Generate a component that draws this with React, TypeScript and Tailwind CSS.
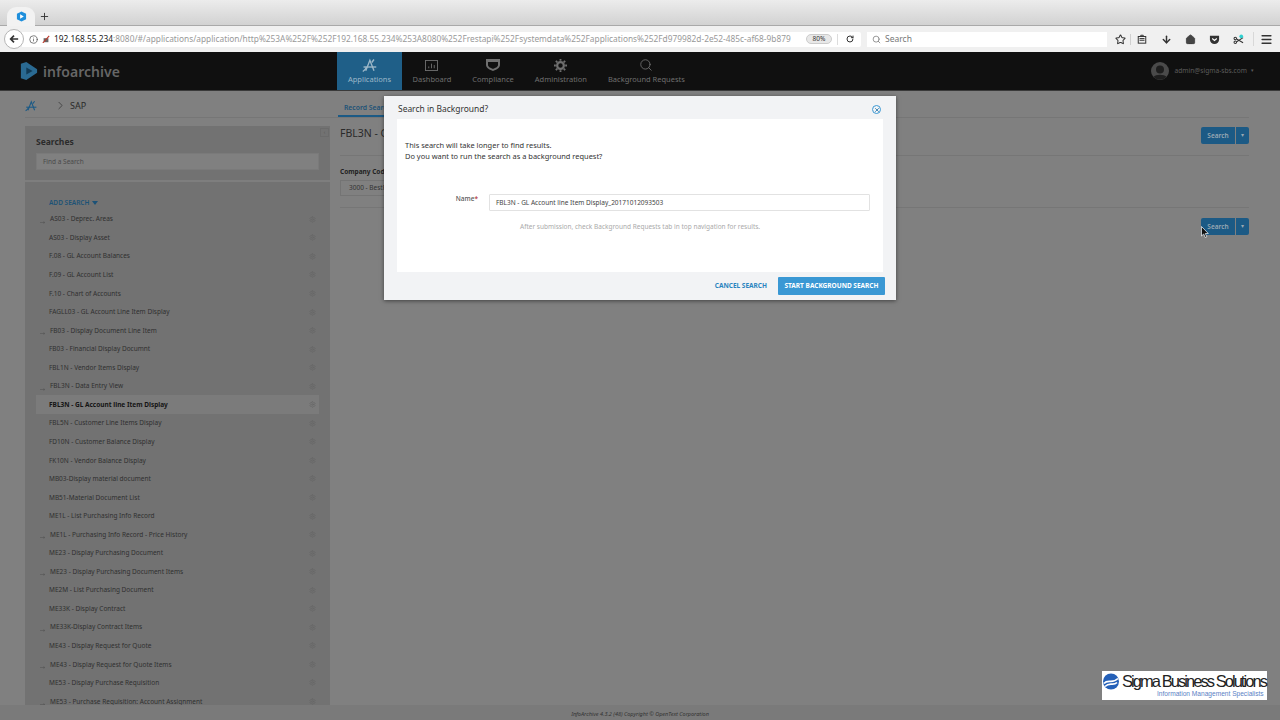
import {ArrowDown, ChevronRight, Home, Info, Menu, Plus, RotateCw, Search, Settings, Star, X} from "lucide-react";

const SEARCHES = [
    {name: "AS03 - Deprec. Areas", sub: true},
    {name: "AS03 - Display Asset"},
    {name: "F.08 - GL Account Balances"},
    {name: "F.09 - GL Account List"},
    {name: "F.10 - Chart of Accounts"},
    {name: "FAGLL03 - GL Account Line Item Display"},
    {name: "FB03 - Display Document Line Item", sub: true},
    {name: "FB03 - Financial Display Documnt"},
    {name: "FBL1N - Vendor Items Display"},
    {name: "FBL3N - Data Entry View", sub: true},
    {name: "FBL3N - GL Account line Item Display", active: true},
    {name: "FBL5N - Customer Line Items Display"},
    {name: "FD10N - Customer Balance Display"},
    {name: "FK10N - Vendor Balance Display"},
    {name: "MB03-Display material document"},
    {name: "MB51-Material Document List"},
    {name: "ME1L - List Purchasing Info Record"},
    {name: "ME1L - Purchasing Info Record - Price History", sub: true},
    {name: "ME23 - Display Purchasing Document"},
    {name: "ME23 - Display Purchasing Document Items", sub: true},
    {name: "ME2M - List Purchasing Document"},
    {name: "ME33K - Display Contract"},
    {name: "ME33K-Display Contract Items", sub: true},
    {name: "ME43 - Display Request for Quote"},
    {name: "ME43 - Display Request for Quote Items", sub: true},
    {name: "ME53 - Display Purchase Requisition"},
    {name: "ME53 - Purchase Requisition: Account Assignment", sub: true},
];

function AppsIcon({className}: {className?: string}) {
    return (
        <svg viewBox="0 0 20 20" className={className} fill="none" stroke="currentColor" strokeWidth="1.8">
            <path d="M5 17 10.500 3 16 17"/>
            <path d="M2 12h17"/>
            <path d="M1 18c2-1 4-3 5-6M13 6l3-4"/>
        </svg>
    );
}

function NavItem({label, active, icon}: { label: string; active?: boolean; icon: React.ReactNode }) {
    return (
        <div className={`flex flex-col items-center justify-end h-[38px] pb-[7px] text-[7.500px] ${active ? "bg-[#1f5f88] text-[#9db8c9] w-[65px]" : "text-[#6f6f6f] px-[10.500px]"}`}>
            <div className="h-[15px] flex items-center mb-[3px]">{icon}</div>
            <span className="whitespace-nowrap leading-none">{label}</span>
        </div>
    );
}

function SplitButton() {
    return (
        <div className="flex gap-[1px] text-[#9aa9b3] shrink-0">
            <div className="w-[34px] h-[17px] bg-[#1c5a85] rounded-l-[2px] flex items-center justify-center text-[6.500px] font-semibold">Search</div>
            <div className="w-[13px] h-[17px] bg-[#1c5a85] rounded-r-[2px] flex items-center justify-center text-[6px]">▾</div>
        </div>
    );
}

function BrowserBar() {
    return (
        <>
            <div className="h-[26px] bg-gradient-to-b from-[#ececec] to-[#d2d2d2] border-b border-[#a9a9a9] flex items-end pl-[7px] shrink-0">
                <div className="w-[28px] h-[19px] bg-[#f2f2f2] rounded-t-[9px] flex items-center justify-center -mb-[1px]">
                    <svg viewBox="0 0 12 12" className="w-[11px] h-[11px]">
                        <path d="M6 0.500 11 3v6l-5 2.500L1 9V3z" fill="#1f8fdc"/>
                        <path d="M4.500 3.500 8.500 6l-4 2.500z" fill="#fff"/>
                    </svg>
                </div>
                <Plus className="w-[11px] h-[11px] ml-[4px] mb-[3px] text-[#333]" strokeWidth={2}/>
            </div>
            <div className="h-[26px] bg-[#f0f0f0] flex items-center pl-[4px] shrink-0">
                <div className="w-[20px] h-[20px] rounded-full bg-white border border-[#b5b5b5] flex items-center justify-center z-10">
                    <svg viewBox="0 0 12 12" className="w-[10px] h-[10px]" fill="none" stroke="#333" strokeWidth="2">
                        <path d="M11 6H2M6 2 2 6l4 4"/>
                    </svg>
                </div>
                <div className="w-[839px] h-[15px] bg-white -ml-[2px] flex items-center pl-[7px] pr-[4px] text-[8.330px] rounded-r-[2px]">
                    <Info className="w-[9px] h-[9px] text-[#555] shrink-0"/>
                    <svg viewBox="0 0 10 10" className="w-[8px] h-[8px] ml-[4px] shrink-0">
                        <rect x="2" y="4" width="6" height="5" fill="#666"/>
                        <path d="M1 10 9 1" stroke="#c0392b" strokeWidth="1.400"/>
                    </svg>
                    <span className="ml-[4px] whitespace-nowrap overflow-hidden flex-1">
                        <span className="text-[#222]">192.168.55.234</span>
                        <span className="text-[#999]">:8080/#/applications/application/http%253A%252F%252F192.168.55.234%253A8080%252Frestapi%252Fsystemdata%252Fapplications%252Fd979982d-2e52-485c-af68-9b879</span>
                    </span>
                    <span className="ml-[6px] w-[26px] h-[10px] rounded-full bg-[#e8e8e8] border border-[#ccc] text-[6.500px] flex items-center justify-center shrink-0 text-[#333]">80%</span>
                    <span className="w-[1px] h-[11px] bg-[#ddd] ml-[5px] shrink-0"/>
                    <RotateCw className="w-[8px] h-[8px] ml-[8px] mr-[3px] shrink-0 text-[#333]" strokeWidth={3}/>
                </div>
                <div className="w-[240px] h-[15px] bg-white ml-[6px] flex items-center pl-[4px] text-[8.500px] text-[#777]">
                    <Search className="w-[9px] h-[9px] mr-[3px] ml-[1px] text-[#777]"/>
                    <span className="ml-[1px]">Search</span>
                </div>
                <div className="flex items-center ml-[8px] text-[#333]">
                    <Star className="w-[11px] h-[11px]" strokeWidth={2.200}/>
                    <span className="w-[1px] h-[11px] bg-[#d0d0d0] ml-[4px]"/>
                    <svg viewBox="0 0 12 12" className="w-[10px] h-[10px] ml-[6px]" fill="none" stroke="currentColor" strokeWidth="1.200">
                        <rect x="1.500" y="3" width="9" height="8"/>
                        <path d="M4.500 3V1.500h3V3M3 5.500h6M3 7.500h6"/>
                    </svg>
                    <ArrowDown className="w-[11px] h-[11px] ml-[14px]" strokeWidth={3.200}/>
                    <Home className="w-[11px] h-[11px] ml-[13px] fill-[#444]" strokeWidth={1.500}/>
                    <svg viewBox="0 0 12 12" className="w-[11px] h-[11px] ml-[13px]">
                        <path d="M1 2h10v4a5 5 0 0 1-10 0z" fill="#333"/>
                        <path d="M3.500 5 6 7l2.500-2" stroke="#fff" strokeWidth="1.300" fill="none"/>
                    </svg>
                    <svg viewBox="0 0 12 12" className="w-[11px] h-[11px] ml-[13px]" stroke="#333" strokeWidth="1.100" fill="none">
                        <circle cx="2.500" cy="9" r="1.400"/>
                        <circle cx="2.500" cy="5" r="1.400"/>
                        <path d="M4 8.500 11 4M4 5.500l7 4"/>
                        <circle cx="9" cy="2.500" r="2" fill="#2fd0d0" stroke="none"/>
                    </svg>
                    <span className="w-[1px] h-[14px] bg-[#d8d8d8] ml-[9px]"/>
                    <Menu className="w-[13px] h-[13px] ml-[6px]" strokeWidth={3}/>
                </div>
            </div>
        </>
    );
}

function AppHeader() {
    return (
        <div className="h-[39px] bg-[#101010] flex items-start shrink-0 border-b border-[#3a3a3a]">
            <div className="w-[337px] h-[38px] pl-[20px] flex items-center">
                <svg viewBox="0 0 20 22" className="w-[18px] h-[20px]">
                    <path d="M1 3 7 1l12 8v4L7 21l-6-2z" fill="#2a6a92"/>
                    <path d="M7 7l7 4-7 4z" fill="#123a55"/>
                </svg>
                <span className="ml-[5px] text-[14px] font-semibold text-[#666] tracking-[0.05px]">infoarchive</span>
            </div>
            <NavItem label="Applications" active icon={<AppsIcon className="w-[15px] h-[15px]"/>}/>
            <NavItem label="Dashboard" icon={
                <svg viewBox="0 0 14 12" className="w-[13px] h-[11px]" fill="none" stroke="currentColor">
                    <rect x="0.500" y="0.500" width="13" height="11"/>
                    <path d="M4 9V7M7 9V4M10 9V5.500"/>
                </svg>
            }/>
            <NavItem label="Compliance" icon={
                <svg viewBox="0 0 14 12" className="w-[14px] h-[12px]" fill="currentColor">
                    <path d="M0 0h14v6c0 3-4 5-7 6-3-1-7-3-7-6zm2 3v3c0 2 3 3 5 4 2-1 5-2 5-4V3z"/>
                </svg>
            }/>
            <NavItem label="Administration" icon={
                <svg viewBox="0 0 14 14" className="w-[13px] h-[13px]" fill="none" stroke="currentColor" strokeWidth="2.400">
                    <circle cx="7" cy="7" r="3.600"/>
                    <path strokeWidth="2" d="M7 0v2M7 12v2M0 7h2M12 7h2M2 2l1.500 1.500M10.500 10.500 12 12M2 12l1.500-1.500M10.500 3.500 12 2"/>
                </svg>
            }/>
            <NavItem label="Background Requests" icon={<Search className="w-[14px] h-[14px]" strokeWidth={1.500}/>}/>
            <div className="ml-auto h-[38px] pr-[26px] flex items-center text-[6.650px] text-[#5c5c5c]">
                <svg viewBox="0 0 18 18" className="w-[18px] h-[18px] mr-[6px]">
                    <circle cx="9" cy="9" r="9" fill="#4a4a4a"/>
                    <circle cx="9" cy="7.500" r="4" fill="#1e1e1e"/>
                    <path d="M2.500 15c2-3 11-3 13 0a9 9 0 0 1-13 0z" fill="#1e1e1e"/>
                </svg>
                admin@sigma-sbs.com
                <span className="ml-[4px] text-[5px]">▾</span>
            </div>
        </div>
    );
}

function Breadcrumbs() {
    return (
        <div className="h-[27px] ml-[25px] mr-[31px] shrink-0 flex border-b border-[#767676]">
            <div className="w-[313px] flex items-center pt-[3px]">
                <AppsIcon className="w-[12px] h-[12px] text-[#1c5a85]"/>
                <ChevronRight className="w-[13px] h-[13px] ml-[17px] text-[#2a2a2a]" strokeWidth={1.200}/>
                <span className="ml-[3px] text-[9px] text-[#2a2a2a]">SAP</span>
            </div>
            <div className="self-end h-[17px] w-[60px] pl-[6px] pt-[4px] border-b-2 border-[#1c5a85] text-[6.800px] leading-[8px] font-semibold text-[#1c5277] whitespace-nowrap">
                Record Search
            </div>
        </div>
    );
}

function SearchRow({name, sub, active}: { name: string; sub?: boolean; active?: boolean }) {
    return (
        <div className={`h-[18.550px] shrink-0 flex items-center relative pr-[3px] text-[6.500px] ${active ? "bg-[#7b7b7b] font-bold text-[#141414]" : "text-[#303030]"} ${sub ? "pl-[14px]" : "pl-[13px]"}`}>
            {sub && (
                <svg viewBox="0 0 8 4" className="absolute left-[4px] top-[11px] w-[6px] h-[3px]" fill="none" stroke="#555" strokeWidth="0.800">
                    <path d="M0 2h6M4.500 0.800 6.500 2 4.500 3.200"/>
                </svg>
            )}
            <span className="flex-1 whitespace-nowrap">{name}</span>
            <Settings className="w-[7px] h-[7px] text-[#666]" strokeWidth={2}/>
        </div>
    );
}

function Sidebar() {
    return (
        <div className="w-[305px] bg-[#727272] shrink-0 relative overflow-hidden">
            <span className="absolute right-[1px] top-[2px] w-[9px] h-[9px] border border-[#6b6b6b] text-[5px] leading-[7px] text-center text-[#555]">‹</span>
            <div className="h-[56px] px-[11px] pt-[10px] border-b-2 border-[#7e7e7e]">
                <div className="text-[8.500px] font-bold text-[#2b2b2b] leading-[12px]">Searches</div>
                <div className="mt-[5px] h-[17px] bg-[#808080] border border-[#7a7a7a] pl-[6px] flex items-center text-[6.500px] text-[#4a4a4a]">Find a Search</div>
            </div>
            <div className="pt-[15px] px-[11px] flex flex-col">
                <div className="pl-[13px] h-[12px] mb-[1px] shrink-0 flex items-center text-[6.500px] font-semibold text-[#1c5277]">
                    ADD SEARCH
                    <span className="ml-[3px] w-0 h-0 border-x-[3px] border-t-[4px] border-x-transparent border-t-[#1c5277]"/>
                </div>
                {SEARCHES.map((s) => (
                    <SearchRow key={s.name} {...s}/>
                ))}
            </div>
        </div>
    );
}

function MainArea() {
    return (
        <div className="flex-1 min-w-0 pl-[10px] pr-[31px]">
            <div className="flex items-start justify-between h-[30px] border-b border-[#767676]">
                <span className="text-[10.500px] leading-[14px] text-[#2a2a2a] whitespace-nowrap">FBL3N - GL Account line Item Display</span>
                <div className="mt-[1px]">
                    <SplitButton/>
                </div>
            </div>
            <div className="h-[52px] pt-[11px] border-b border-[#767676]">
                <div className="text-[6.500px] leading-[9px] font-bold text-[#222]">Company Code</div>
                <div className="mt-[4px] w-[110px] h-[16px] border border-[#747474] pl-[8px] flex items-center text-[6.500px] text-[#333]">3000 - BestRun</div>
            </div>
            <div className="flex justify-end pt-[10px]">
                <SplitButton/>
            </div>
        </div>
    );
}

function SearchDialog() {
    return (
        <div className="absolute left-[384px] top-[96px] w-[512px] h-[204px] bg-[#f2f3f5] shadow-[0_1px_4px_rgba(0,0,0,0.5)] flex flex-col px-[13px] text-[#333]">
            <div className="h-[23px] pt-[4px] pl-[1px] shrink-0 flex items-center justify-between text-[8.450px]">
                <span>Search in Background?</span>
                <span className="w-[9px] h-[9px] rounded-full border border-[#3a98d4] flex items-center justify-center mr-[2px]">
                    <X className="w-[6px] h-[6px] text-[#2a7ab0]" strokeWidth={3.500}/>
                </span>
            </div>
            <div className="h-[153px] shrink-0 bg-white pl-[8px] pr-[13px] pt-[21px]">
                <p className="text-[7.450px] leading-[10.500px] text-[#333]">
                    This search will take longer to find results.<br/>
                    Do you want to run the search as a background request?
                </p>
                <div className="flex mt-[33px]">
                    <span className="w-[73px] text-right text-[6.500px] text-[#555] leading-[10px] font-medium">Name<span className="text-[#b0202a]">*</span></span>
                    <div className="ml-[11px] flex-1 h-[17px] border border-[#e2e2e2] rounded-[1px] pl-[6px] flex items-center text-[6.500px] text-[#444]">
                        FBL3N - GL Account line Item Display_20171012093503
                    </div>
                </div>
                <p className="mt-[11px] pl-[115px] text-[6.500px] text-[#aaa]">After submission, check Background Requests tab in top navigation for results.</p>
            </div>
            <div className="flex-1 flex items-center justify-end -mr-[2px] text-[6.500px] font-bold">
                <span className="text-[#2a84bf] mr-[11px]">CANCEL SEARCH</span>
                <span className="w-[107px] h-[18px] bg-[#3a98d4] rounded-[1px] text-white flex items-center justify-center">START BACKGROUND SEARCH</span>
            </div>
        </div>
    );
}

function SigmaLogo() {
    return (
        <div className="absolute left-[1102px] top-[671px] w-[165px] h-[29px] bg-white flex pl-[1px] pt-[2px]">
            <svg viewBox="0 0 16 16" className="w-[16px] h-[17px] shrink-0">
                <circle cx="8" cy="8" r="8" fill="#2460b8"/>
                <path d="M1 10c4-5 8 1 14-5M2 13c5-5 8 0 12-4" stroke="#fff" strokeWidth="1.600" fill="none"/>
            </svg>
            <div className="ml-[3px] font-['Liberation_Sans',sans-serif] whitespace-nowrap">
                <div className="text-[16.500px] leading-[17px] tracking-[-1.950px] text-[#222]">Sigma Business Solutions</div>
                <div className="text-[6.600px] leading-[7px] text-[#5a7fc4] ml-[35px]">Information Management Specialists</div>
            </div>
        </div>
    );
}

function Cursor() {
    return (
        <svg viewBox="0 0 8 12" className="absolute left-[1201px] top-[226px] w-[8px] h-[12px]">
            <path d="M0.500 0.500v9.500l2.200-2 1.500 3.500 1.600-.7L4.300 7.500H7.300z" fill="#111" stroke="#fff" strokeWidth="0.700"/>
        </svg>
    );
}

export default function App() {
    return (
        <div className="w-[1280px] h-[720px] relative overflow-hidden bg-[#808080] flex flex-col font-['Noto_Sans',sans-serif]">
            <BrowserBar/>
            <AppHeader/>
            <Breadcrumbs/>
            <div className="flex-1 flex pl-[25px] pt-[8px] min-h-0">
                <Sidebar/>
                <MainArea/>
            </div>
            <div className="h-[15px] pt-[3px] shrink-0 bg-[#7a7a7a] flex items-center justify-center text-[5.500px] italic text-[#333]">
                InfoArchive 4.3.2 (48) Copyright © OpenText Corporation
            </div>
            <SearchDialog/>
            <SigmaLogo/>
            <Cursor/>
        </div>
    );
}
